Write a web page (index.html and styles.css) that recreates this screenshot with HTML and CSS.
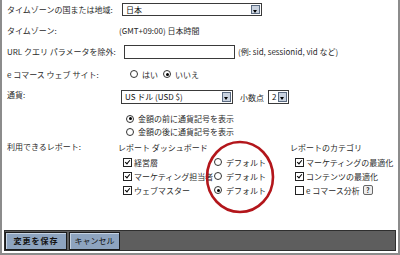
FILE: index.html
```html
<!DOCTYPE html>
<html lang="ja">
<head>
    <meta charset="UTF-8">
    <title>プロファイル設定</title>
    <link rel="stylesheet" href="styles.css">
</head>
<body>
    <div class="panel">
        <div class="form">
            <div class="row r1">
                <span class="label">タイムゾーンの国または地域:</span>
                <div class="field">
                    <div class="select tz"><span>日本</span><i class="arrow"></i></div>
                </div>
            </div>
            <div class="row r2">
                <span class="label">タイムゾーン:</span>
                <div class="field plain">(GMT+09:00) 日本時間</div>
            </div>
            <div class="row r3">
                <span class="label">URL クエリ パラメータを除外:</span>
                <div class="field">
                    <div class="input"></div>
                    <span class="hint">(例: sid, sessionid, vid など)</span>
                </div>
            </div>
            <div class="row r4">
                <span class="label">e コマース ウェブ サイト:</span>
                <div class="field ecom">
                    <span class="radio"></span><span class="opt">はい</span>
                    <span class="radio on"></span><span class="opt">いいえ</span>
                </div>
            </div>
            <div class="row r5">
                <span class="label">通貨:</span>
                <div class="currency">
                    <div class="field">
                        <div class="select cur"><span>US ドル (USD $)</span><i class="arrow"></i></div>
                        <span class="dec-label">小数点</span>
                        <div class="select dec"><span>2</span><i class="arrow"></i></div>
                    </div>
                    <div class="choice first"><span class="radio on"></span>金額の前に通貨記号を表示</div>
                    <div class="choice"><span class="radio"></span>金額の後に通貨記号を表示</div>
                </div>
            </div>
            <div class="row r6">
                <span class="label">利用できるレポート:</span>
                <div class="reports">
                    <div class="head">レポート ダッシュボード</div>
                    <div></div>
                    <div class="head">レポートのカテゴリ</div>

                    <div class="item"><span class="check on"></span>経営層</div>
                    <div class="item def"><span class="radio"></span>デフォルト</div>
                    <div class="item"><span class="check on"></span>マーケティングの最適化</div>

                    <div class="item"><span class="check on"></span>マーケティング担当者</div>
                    <div class="item def"><span class="radio"></span>デフォルト</div>
                    <div class="item"><span class="check on"></span>コンテンツの最適化</div>

                    <div class="item"><span class="check on"></span>ウェブマスター</div>
                    <div class="item def"><span class="radio on"></span>デフォルト</div>
                    <div class="item"><span class="check"></span>e コマース分析 <span class="help">?</span></div>
                </div>
            </div>
        </div>

        <div class="actions">
            <button class="btn save">変更を保存</button>
            <button class="btn cancel">キャンセル</button>
        </div>

        <svg class="mark" width="74" height="78" viewBox="0 0 74 78">
            <ellipse cx="36" cy="38" rx="33" ry="35" fill="none" stroke="#b3161b" stroke-width="2.6"/>
        </svg>
    </div>
</body>
</html>
```

FILE: styles.css
```css
html, body {
    margin: 0;
    padding: 0;
    background: #ffffff;
}

body {
    font-family: "Noto Sans CJK JP", sans-serif;
    font-size: 8px;
    color: #2a2a2a;
}

.panel {
    position: relative;
    height: 255px;
    box-sizing: border-box;
    border: 2px solid #8c8c8c;
    border-top: none;
    display: flex;
    flex-direction: column;
}

.form {
    padding-left: 5px;
}

.row {
    display: grid;
    grid-template-columns: 113px 1fr;
    align-items: center;
}

.r1 { height: 19px; }
.r2 { height: 23px; }
.r3 { height: 19px; }
.r4 { height: 26px; }

.r5 {
    align-items: start;
    padding-top: 2px;
}

.r6 {
    align-items: start;
    margin-top: 3px;
}

.r6 .label {
    line-height: 12px;
}

.field {
    display: flex;
    align-items: center;
}

.plain {
    margin-left: -1px;
}

/* select boxes */
.select {
    display: flex;
    align-items: stretch;
    height: 13px;
    box-sizing: border-box;
    border: 1px solid #3a3a3a;
    background: #ffffff;
}

.select span {
    flex: 1;
    padding-left: 3px;
    line-height: 11px;
    color: #111;
}

.select .arrow {
    width: 7px;
    margin: 1px;
    background: #c9d2df;
    border: 1px solid #5a6a80;
    position: relative;
}

.select .arrow::after {
    content: "";
    position: absolute;
    left: 1px;
    top: 4px;
    border-left: 2px solid transparent;
    border-right: 2px solid transparent;
    border-top: 3px solid #000;
}

.tz {
    width: 140px;
    margin-left: 2px;
}

.cur {
    width: 112px;
    height: 14px;
    margin-left: 1px;
}

.dec {
    width: 21px;
    height: 14px;
}

.dec-label {
    margin: 0 4px 0 7px;
}

.input {
    width: 111px;
    height: 14px;
    box-sizing: border-box;
    border: 1px solid #3a3a3a;
    margin-left: 4px;
}

.hint {
    margin-left: 3px;
}

/* radios and checks */
.radio {
    display: inline-block;
    width: 6px;
    height: 6px;
    border: 1px solid #333;
    border-radius: 50%;
    background: #fff;
    position: relative;
    margin-right: 4px;
    flex: none;
}

.radio.on::after {
    content: "";
    position: absolute;
    left: 1.5px;
    top: 1.5px;
    width: 3px;
    height: 3px;
    border-radius: 50%;
    background: #000;
}

.check {
    display: inline-block;
    width: 7px;
    height: 7px;
    border: 1px solid #222;
    background: #fff;
    position: relative;
    margin-right: 2px;
    flex: none;
}

.check.on::after {
    content: "";
    position: absolute;
    left: 2px;
    top: 0;
    width: 2px;
    height: 4px;
    border-right: 1.5px solid #000;
    border-bottom: 1.5px solid #000;
    transform: rotate(40deg);
}

.ecom {
    margin-left: 10px;
}

.ecom .opt {
    margin-right: 5px;
}

.currency .field {
    margin-top: 1px;
}

.choice {
    display: flex;
    align-items: center;
    height: 13px;
    margin-left: 6px;
}

.choice.first {
    margin-top: 8px;
}

/* report grid */
.reports {
    display: grid;
    grid-template-columns: 96px 76px auto;
    grid-auto-rows: 14px;
    align-items: center;
    margin-left: -2px;
}

.reports .head {
    height: 12px;
    line-height: 12px;
}

.reports .item {
    display: flex;
    align-items: center;
    white-space: nowrap;
    padding-left: 5px;
}

.reports .def {
    padding-left: 0;
}

.help {
    display: inline-block;
    width: 8px;
    height: 8px;
    line-height: 8px;
    margin-left: 3px;
    border: 1px solid #666;
    border-radius: 2px;
    background: #eeeeee;
    text-align: center;
    font-size: 7px;
    font-weight: bold;
}

/* bottom bar */
.actions {
    margin: auto 2px 2px 2px;
    height: 21px;
    box-sizing: border-box;
    background: #5e5e5e;
    border: 1px solid #2e2e2e;
    display: flex;
    align-items: center;
    gap: 2px;
}

.btn {
    height: 18px;
    box-sizing: border-box;
    padding: 0;
    font-family: inherit;
    font-size: 8px;
    color: #111;
    white-space: nowrap;
    background: #8ea4bf;
    border: 1px solid #1b1b1b;
    box-shadow: inset 1px 1px 0 #c6d3e2;
}

.save {
    width: 62px;
    font-weight: bold;
    letter-spacing: 1px;
}

.cancel {
    width: 51px;
}

.mark {
    position: absolute;
    left: 202px;
    top: 139px;
}
```
